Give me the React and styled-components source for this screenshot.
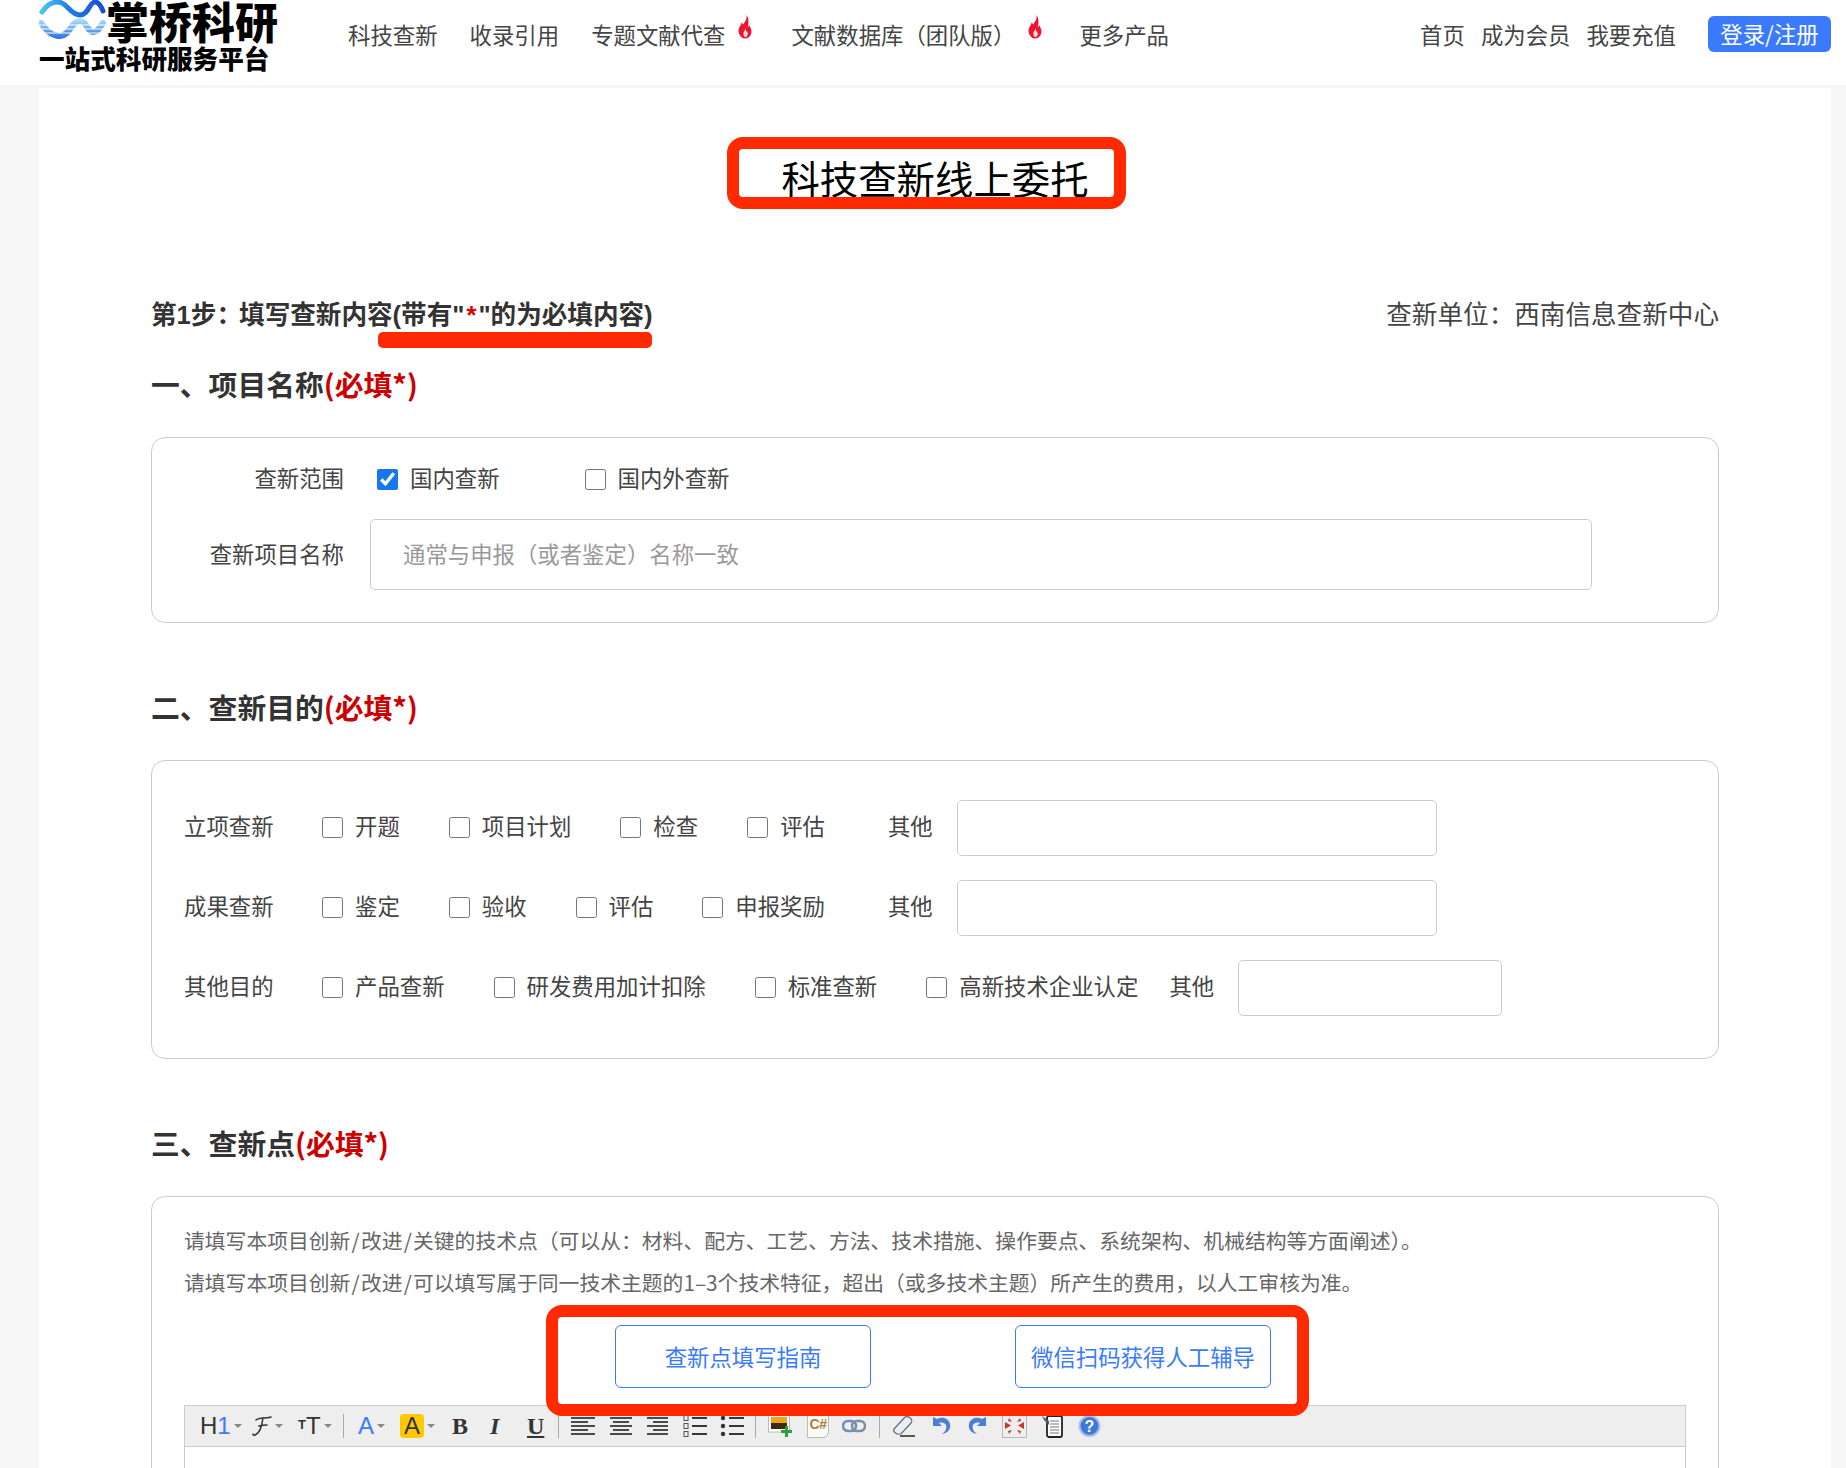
import React from "react";
import styled, { createGlobalStyle } from "styled-components";

const Global = createGlobalStyle`
  html, body { margin: 0; padding: 0; height: 1468px; overflow: hidden; background: #f7f7f7; }
  body { font-family: "Noto Sans CJK SC", "Noto Sans", sans-serif; color: #333; }
  #root { height: 1468px; overflow: hidden; }
  * { box-sizing: border-box; }
`;

const Header = styled.header`
  height: 85px; background: #fff; display: flex; align-items: center;
  padding: 0 15px 0 39px; overflow: hidden;
`;
const Logo = styled.div`
  width: 309px; height: 85px; flex: none; display: flex; flex-direction: column; color: #000;
`;
const LogoTop = styled.div`
  display: flex; align-items: flex-start; height: 45px; overflow: hidden;
`;
const LogoName = styled.div`
  font-size: 43px; font-weight: 900; line-height: 40px; margin-left: -1px; white-space: nowrap;
`;
const LogoSub = styled.div`
  font-size: 25.6px; font-weight: 900; line-height: 26px; white-space: nowrap;
`;
const Nav = styled.nav`
  display: flex; align-items: center; gap: 32px; font-size: 22.4px; flex: 1; white-space: nowrap; padding-bottom: 17px;
`;
const NavItem = styled.a`
  display: flex; align-items: center; line-height: 30px; color: #444;
`;
const Flame = styled.svg`
  width: 14px; height: 24px; margin: -14px ${p => p.$mr}px 0 13px; flex: none;
`;
const RightNav = styled.div`
  display: flex; align-items: center; gap: 16px; font-size: 22.4px; color: #444; white-space: nowrap; padding-bottom: 17px;
`;
const LoginButton = styled.button`
  margin-left: 16px; width: 123px; height: 36px; border: 0; border-radius: 6px; padding: 0 0 2px;
  background: #3a7afe; color: #fff; font: inherit;
`;

const Main = styled.main`
  margin: 3px 15px 0 39px; padding: 65px 112px 0; background: #fff; height: 1380px;
`;
const TitleRow = styled.div`
  display: flex; justify-content: center;
`;
const Title = styled.h1`
  position: relative; margin: 0; font-size: 38.4px; line-height: 48px; font-weight: 400; color: #000;
`;
const RedFrame = styled.div`
  position: absolute; border: 12px solid #ff2a00; border-radius: 16px; z-index: 3; pointer-events: none;
  top: ${p => p.$t}px; bottom: ${p => p.$b}px; left: ${p => p.$l}px; right: ${p => p.$r}px;
`;
const StepRow = styled.div`
  margin-top: 97px; height: 32px; display: flex; justify-content: space-between; align-items: flex-start;
  font-size: 25.6px; line-height: 30px;
`;
const StepText = styled.div`
  position: relative; height: 32px; line-height: 34px; font-weight: 700; color: #333;
  font-family: "Liberation Sans", "Noto Sans CJK SC", sans-serif;
  b { color: #e00000; padding: 0 2px; }
`;
const Colon = styled.span`
  margin-right: -3px;
`;
const Underline = styled.div`
  position: absolute; left: 227px; top: 34px; width: 274px; height: 16px;
  border-radius: 5px; background: #ff2a00;
`;
const Unit = styled.div`
  color: #444;
`;
const SectionTitle = styled.h2`
  margin: ${p => p.$mt}px 0 0; height: 40px; font-size: 28.8px; line-height: 37px; font-weight: 700; color: #333;
  span { color: #cc0000; }
`;
const Card = styled.section`
  margin-top: ${p => p.$mt || 32}px; border: 1px solid #ccc; border-radius: 14px; background: #fff;
  padding: ${p => p.$pad};
  height: ${p => p.$h}px;
`;
const ScopeRow = styled.div`
  display: flex; align-items: center; height: 30px;
`;
const RowLabel = styled.div`
  width: ${p => p.$w}px; flex: none; text-align: ${p => p.$align || "right"}; font-size: 22.4px; color: #444; white-space: nowrap;
  padding-bottom: 3px;
`;
const Option = styled.label`
  display: flex; align-items: center; gap: 12px; font-size: 22.4px; line-height: 30px; color: #444;
  white-space: nowrap; margin-left: ${p => p.$ml}px; flex: none; padding-bottom: 3px;
`;
const Check = styled.input.attrs({ type: "checkbox" })`
  width: 21px; height: 21px; margin: 5px 0 0; accent-color: #1677f0; flex: none;
`;
const NameRow = styled.div`
  display: flex; align-items: center; margin-top: 26px;
`;
const NameInput = styled.input`
  width: 1222px; height: 71px; margin-left: 26px; padding: 0 32px 4px; border: 1px solid #ccc; border-radius: 5px;
  font: inherit; font-size: 22.4px; color: #444; outline: none;
  &::placeholder { color: #999; opacity: 1; }
`;
const PurposeRow = styled.div`
  display: flex; align-items: center; height: 56px; padding-bottom: 4px; margin-top: ${p => p.$mt || 0}px;
`;
const OtherLabel = styled.div`
  font-size: 22.4px; color: #444; margin-left: ${p => p.$ml}px; flex: none; white-space: nowrap; padding-bottom: 3px;
`;
const OtherInput = styled.input`
  width: ${p => p.$w}px; height: 56px; margin-left: 24px; border: 1px solid #ccc; border-radius: 5px; flex: none; outline: none;
  align-self: flex-start;
`;
const Hint = styled.p`
  margin: 0; height: 42px; font-size: 20.8px; line-height: 40px; color: #666; white-space: nowrap;
`;
const Slash = styled.span`
  padding: 0 1.2px;
`;
const GuideRow = styled.div`
  position: relative; display: flex; justify-content: center; gap: 144px; margin: 21px 0 17px; padding-left: 16px;
`;
const GuideButton = styled.button`
  width: 256px; height: 63px; padding: 0 0 2px; border: 1px solid #3a7afe; border-radius: 6px; background: #fff;
  color: #3a7afe; font: inherit; font-size: 22.4px; white-space: nowrap;
`;
const Toolbar = styled.div`
  height: 42px; background: #eee; border: 1px solid #ccc; display: flex; align-items: center; padding-left: 15px;
`;
const Tool = styled.div`
  width: ${p => p.$w}px; margin-left: ${p => p.$ml || 0}px; height: 24px; flex: none;
  display: flex; align-items: center; justify-content: ${p => p.$j || "flex-start"};
  font-family: ${p => p.$font || '"Liberation Sans", sans-serif'}; font-size: 24px; line-height: 24px; color: #333;
  font-style: ${p => p.$italic ? "italic" : "normal"}; font-weight: ${p => p.$bold ? 700 : 400};
  text-decoration: ${p => p.$under ? "underline" : "none"};
  border-radius: 4px; background: ${p => p.$bg || "transparent"};
  svg { display: block; flex: none; }
`;
const Blue = styled.span`
  color: #3a7afe;
`;
const Small = styled.span`
  font-size: ${p => p.$s}px; font-weight: 700; align-self: flex-end; margin-bottom: 1px;
`;
const Caret = styled.i`
  width: 0; height: 0; margin-left: ${p => p.$ml ?? 3}px; flex: none;
  border-left: 4px solid transparent; border-right: 4px solid transparent; border-top: 4px solid #888;
`;
const ToolSep = styled.div`
  width: 1px; height: 24px; background: #aaa; margin-left: ${p => p.$ml}px; flex: none;
`;
const Editor = styled.div`
  height: 60px; border-left: 1px solid #ccc; border-right: 1px solid #ccc; background: #fff;
`;
const CodeDoc = styled.div`
  width: 22px; height: 24px; background: #fbfbf6; border: 1px solid #bbb; border-bottom-right-radius: 6px;
  font-size: 14px; font-weight: 700; color: #a9803c; line-height: 19px; text-align: center;
  font-family: "Liberation Sans", sans-serif; letter-spacing: -.5px;
`;

const Fire = ({ mr }) => (
  <Flame viewBox="0 0 14 24" $mr={mr}>
    <path fill="#f2122f" d="M8.500 0C9.300 4 7 6.500 5.200 9.500 4.600 8.500 4 8 3.400 7.500 3.700 10 1 11.500.6 15c-.4 4 2.400 8.500 6.400 8.500 4 0 6.600-3.500 6.400-7.500-.1-2.800-1.500-4-2-6-.5 1.200-.9 2-1.600 2.500C10.800 8 11 3.500 8.500 0z"/>
    <path fill="#ffd9dd" d="M7.500 13c0 2-1.800 3.300-2.100 5.200-.3 1.800.8 3.800 2 3.800 1.500 0 2.500-1.800 2.300-3.500-.1-1.200-.8-1.800-1-2.800-.3.300-.5.700-.7.900 0-1.300-.1-2.700-.5-3.600z"/>
  </Flame>
);

const WaveMark = () => (
  <svg width="68" height="44" viewBox="0 0 68 44" style={{ flex: "none" }}>
    <defs>
      <linearGradient id="wa" x1="0" x2="1"><stop offset="0" stopColor="#4cc4f0"/><stop offset=".45" stopColor="#1e7fe0"/><stop offset="1" stopColor="#1a4fcf"/></linearGradient>
      <linearGradient id="wb" gradientUnits="userSpaceOnUse" x1="0" x2="0" y1="19" y2="40"><stop offset="0" stopColor="#b4e2f9"/><stop offset="1" stopColor="#1f68e0"/></linearGradient>
    </defs>
    <path d="M3 12C8 5 12 2 19 2c9 0 12 13 22 13 9 0 9-13 15-13 4 0 6 4 8 9" fill="none" stroke="url(#wa)" strokeWidth="5" strokeLinecap="round"/>
    <path d="M2 23c6 8 10 13 19 13 10 0 11-15 20-15 7 0 7 11 13 11 5 0 7-5 10-9" fill="none" stroke="url(#wb)" strokeWidth="6" strokeLinecap="round"/>
    <g stroke="#fff" strokeWidth="1">
      <line x1="0" x2="68" y1="25" y2="25"/><line x1="0" x2="68" y1="29" y2="29"/><line x1="0" x2="68" y1="33" y2="33"/>
    </g>
  </svg>
);

const ScriptF = () => (
  <svg width="20" height="24" viewBox="0 0 20 24">
    <path d="M4 6c4-3 9-1 15-3M11 4C10 10 9 18 3 21c-1 .5-2 0-2-1M7 12c3-1 5-1 8-1" fill="none" stroke="#333" strokeWidth="1.500" strokeLinecap="round"/>
  </svg>
);
const Lines = ({ w, rows }) => (
  <svg width={w} height="24" viewBox={`0 0 ${w} 24`}>
    {rows.map(([x1, x2], i) => (
      <line key={i} x1={x1} x2={x2} y1={4 + i * 4} y2={4 + i * 4} stroke="#222" strokeWidth="1.600"/>
    ))}
  </svg>
);
const ListIcon = ({ numbered }) => (
  <svg width="24" height="24" viewBox="0 0 24 24">
    {[4, 12, 20].map(y => <line key={y} x1="9" x2="24" y1={y} y2={y} stroke="#222" strokeWidth="1.800"/>)}
    {numbered
      ? [4, 12, 20].map(y => <rect key={y} x="1" y={y - 2.500} width="4" height="5" fill="none" stroke="#555" strokeWidth="1"/>)
      : [4, 12, 20].map(y => <circle key={y} cx="3" cy={y} r="2.200" fill="#333"/>)}
  </svg>
);
const ImageIcon = () => (
  <svg width="24" height="24" viewBox="0 0 24 24">
    <rect x=".5" y="1" width="21" height="17" fill="#fff" stroke="#bbb"/>
    <rect x="3" y="3" width="16" height="6" fill="#f3a31b"/>
    <path d="M3 9h16v6H3z" fill="#3a2a14"/>
    <path d="M17 12h3v4h4v3h-4v4h-3v-4h-4v-3h4z" fill="#2f9e3f"/>
  </svg>
);
const LinkIcon = () => (
  <svg width="24" height="24" viewBox="0 0 24 24">
    <rect x="1" y="7" width="13" height="10" rx="5" fill="none" stroke="#6f8fb8" strokeWidth="2.600"/>
    <rect x="10" y="7" width="13" height="10" rx="5" fill="none" stroke="#7d8ea5" strokeWidth="2.600"/>
  </svg>
);
const EraserIcon = () => (
  <svg width="23" height="24" viewBox="0 0 23 24">
    <path d="M2 15 13 3c2-1 5 0 6 2 1 1 1 3 0 4L9 20H5c-2-1-4-3-3-5z" fill="#e8eef5" stroke="#667" strokeWidth="1.200"/>
    <line x1="8" x2="23" y1="22" y2="22" stroke="#333" strokeWidth="1.600"/>
  </svg>
);
const UndoIcon = ({ flip }) => (
  <svg width="20" height="24" viewBox="0 0 20 24" style={flip ? { transform: "scaleX(-1)" } : undefined}>
    <path d="M2 3v9h9L8 9c3-1 6 0 7 2 1 3 0 6-4 9 6-1 9-5 8-10-1-5-7-8-13-5z" fill="#4a7fd6"/>
  </svg>
);
const FullIcon = () => (
  <svg width="25" height="24" viewBox="0 0 25 24">
    <rect x=".5" y=".5" width="24" height="23" fill="#eee" stroke="#bbb"/>
    <g fill="#c0392b">
      <path d="M3 8l6 3.500-6 3.500z"/><path d="M22 8l-6 3.500 6 3.500z"/>
      <path d="M7 4l3 4-4-1z"/><path d="M18 4l-3 4 4-1z"/><path d="M7 20l3-4-4 1z"/><path d="M18 20l-3-4 4 1z"/>
    </g>
  </svg>
);
const ClipIcon = () => (
  <svg width="21" height="24" viewBox="0 0 21 24">
    <rect x="5" y="2" width="15" height="21" rx="2" fill="#fff" stroke="#222" strokeWidth="1.800"/>
    <path d="M0 2l7 5v4L2 6z" fill="#555"/>
    {[7, 10, 13, 16, 19].map(y => <line key={y} x1="8" x2="17" y1={y} y2={y} stroke="#777" strokeWidth="1"/>)}
  </svg>
);
const HelpIcon = () => (
  <svg width="23" height="24" viewBox="0 0 23 24">
    <circle cx="11.500" cy="12" r="10" fill="#3f78d8" stroke="#a8c2ea" strokeWidth="2"/>
    <text x="11.500" y="18" textAnchor="middle" fontSize="16" fontWeight="700" fontFamily="Liberation Sans" fill="#fff">?</text>
  </svg>
);

const purposeRows = [
  { label: "立项查新", items: ["开题", "项目计划", "检查", "评估"], otherMl: 63, w: 480 },
  { label: "成果查新", items: ["鉴定", "验收", "评估", "申报奖励"], otherMl: 63, w: 480 },
  { label: "其他目的", items: ["产品查新", "研发费用加计扣除", "标准查新", "高新技术企业认定"], otherMl: 31, w: 264 },
];

export default function App() {
  return (
    <>
      <Global />
      <Header>
        <Logo>
          <LogoTop>
            <WaveMark />
            <LogoName>掌桥科研</LogoName>
          </LogoTop>
          <LogoSub>一站式科研服务平台</LogoSub>
        </Logo>
        <Nav>
          <NavItem>科技查新</NavItem>
          <NavItem>收录引用</NavItem>
          <NavItem>专题文献代查<Fire mr={7} /></NavItem>
          <NavItem>文献数据库（团队版）<Fire mr={5} /></NavItem>
          <NavItem>更多产品</NavItem>
        </Nav>
        <RightNav>
          <span>首页</span>
          <span>成为会员</span>
          <span>我要充值</span>
          <LoginButton>登录/注册</LoginButton>
        </RightNav>
      </Header>
      <Main>
        <TitleRow>
          <Title>
            科技查新线上委托
            <RedFrame $t={-16} $b={-8} $l={-54} $r={-37} />
          </Title>
        </TitleRow>
        <StepRow>
          <StepText>
            第1步<Colon>：</Colon>填写查新内容(带有"<b>*</b>"的为必填内容)
            <Underline />
          </StepText>
          <Unit>查新单位：西南信息查新中心</Unit>
        </StepRow>

        <SectionTitle $mt={35}>一、项目名称<span>(必填*)</span></SectionTitle>
        <Card $pad="25px 0 0 0" $h={186}>
          <ScopeRow>
            <RowLabel $w={192}>查新范围</RowLabel>
            <Option $ml={33}><Check defaultChecked />国内查新</Option>
            <Option $ml={85}><Check />国内外查新</Option>
          </ScopeRow>
          <NameRow>
            <RowLabel $w={192}>查新项目名称</RowLabel>
            <NameInput placeholder="通常与申报（或者鉴定）名称一致" />
          </NameRow>
        </Card>

        <SectionTitle $mt={65}>二、查新目的<span>(必填*)</span></SectionTitle>
        <Card $pad="39px 0 0 32px" $h={299}>
          {purposeRows.map((row, i) => (
            <PurposeRow key={row.label} $mt={i ? 24 : 0}>
              <RowLabel $w={90} $align="left">{row.label}</RowLabel>
              {row.items.map((text, j) => (
                <Option key={text} $ml={j ? 49 : 48}><Check />{text}</Option>
              ))}
              <OtherLabel $ml={row.otherMl}>其他</OtherLabel>
              <OtherInput $w={row.w} />
            </PurposeRow>
          ))}
        </Card>

        <SectionTitle $mt={65}>三、查新点<span>(必填*)</span></SectionTitle>
        <Card $mt={32} $pad="23px 32px 0">
          <Hint>请填写本项目创新<Slash>/</Slash>改进<Slash>/</Slash>关键的技术点（可以从：材料、配方、工艺、方法、技术措施、操作要点、系统架构、机械结构等方面阐述）。</Hint>
          <Hint>请填写本项目创新<Slash>/</Slash>改进<Slash>/</Slash>可以填写属于同一技术主题的1–3个技术特征，超出（或多技术主题）所产生的费用，以人工审核为准。</Hint>
          <GuideRow>
            <GuideButton>查新点填写指南</GuideButton>
            <GuideButton>微信扫码获得人工辅导</GuideButton>
            <RedFrame $t={-20} $b={-28} $l={362} $r={377} />
          </GuideRow>
          <Toolbar>
            <Tool $w={36}>H<Blue>1</Blue><Caret /></Tool>
            <Tool $w={28} $ml={16}><ScriptF /><Caret /></Tool>
            <Tool $w={31} $ml={18}><Small $s={13}>T</Small>T<Caret /></Tool>
            <ToolSep $ml={14} />
            <Tool $w={26} $ml={14}><Blue>A</Blue><Caret /></Tool>
            <Tool $w={24} $ml={16} $bg="#ffc800" $j="center">A</Tool>
            <Tool $w={10} $ml={0}><Caret /></Tool>
            <Tool $w={15} $ml={18} $font='"Liberation Serif", serif' $bold>B</Tool>
            <Tool $w={13} $ml={23} $font='"Liberation Serif", serif' $bold $italic>I</Tool>
            <Tool $w={14} $ml={24} $font='"Liberation Serif", serif' $bold $under>U</Tool>
            <ToolSep $ml={17} />
            <Tool $w={24} $ml={12}><Lines w={24} rows={[[0, 24], [0, 17], [0, 24], [0, 17], [0, 24]]} /></Tool>
            <Tool $w={22} $ml={15}><Lines w={22} rows={[[0, 22], [3, 19], [0, 22], [3, 19], [0, 22]]} /></Tool>
            <Tool $w={21} $ml={15}><Lines w={21} rows={[[0, 21], [6, 21], [0, 21], [6, 21], [0, 21]]} /></Tool>
            <Tool $w={24} $ml={15}><ListIcon numbered /></Tool>
            <Tool $w={24} $ml={13}><ListIcon /></Tool>
            <ToolSep $ml={11} />
            <Tool $w={24} $ml={12}><ImageIcon /></Tool>
            <Tool $w={22} $ml={15}><CodeDoc>C#</CodeDoc></Tool>
            <Tool $w={24} $ml={13}><LinkIcon /></Tool>
            <ToolSep $ml={13} />
            <Tool $w={23} $ml={12}><EraserIcon /></Tool>
            <Tool $w={20} $ml={16}><UndoIcon /></Tool>
            <Tool $w={20} $ml={17}><UndoIcon flip /></Tool>
            <Tool $w={25} $ml={14}><FullIcon /></Tool>
            <Tool $w={21} $ml={15}><ClipIcon /></Tool>
            <Tool $w={23} $ml={15}><HelpIcon /></Tool>
          </Toolbar>
          <Editor />
        </Card>
      </Main>
    </>
  );
}
